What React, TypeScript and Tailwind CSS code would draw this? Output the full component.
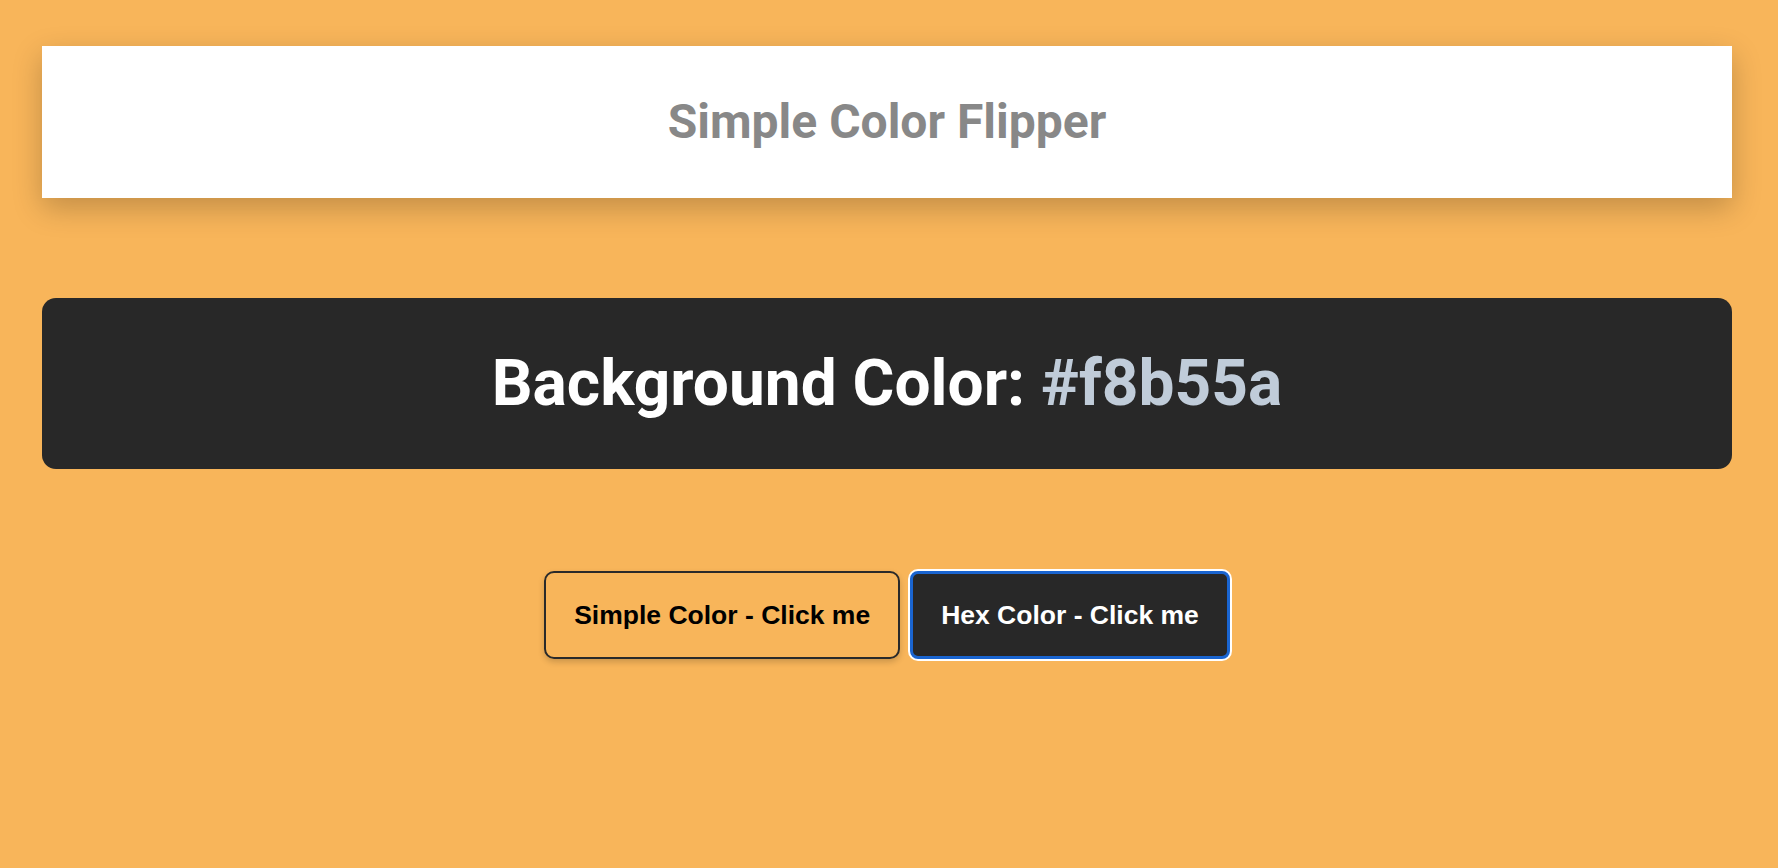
import React, { useState } from 'react';

const simpleColors = ['#f8b55a', 'red', 'green', 'rgba(133,122,200)', '#f15025'];
const hexChars = '0123456789abcdef';

function App() {
  const [color, setColor] = useState('#f8b55a');
  const [lastMode, setLastMode] = useState<'simple' | 'hex'>('hex');

  const flipSimple = () => {
    const next = simpleColors[Math.floor(Math.random() * simpleColors.length)];
    setColor(next);
    setLastMode('simple');
  };

  const flipHex = () => {
    let hex = '#';
    for (let i = 0; i < 6; i++) {
      hex += hexChars[Math.floor(Math.random() * 16)];
    }
    setColor(hex);
    setLastMode('hex');
  };

  return (
    <div
      className="min-h-screen pt-[46px] pl-[42px] pr-[46px] font-['Roboto',sans-serif]"
      style={{ backgroundColor: color }}
    >
      <header className="h-[152px] bg-white flex items-center justify-center shadow-[0_10px_28px_rgba(0,0,0,0.22)]">
        <h1 className="text-[48px] font-bold text-[#888888] leading-none">Simple Color Flipper</h1>
      </header>

      <section className="mt-[100px] h-[171px] rounded-[14px] bg-[#282828] flex items-center justify-center">
        <h2 className="text-[64px] font-bold text-white leading-none">
          Background Color: <span className="text-[#c0ccd9]">{color}</span>
        </h2>
      </section>

      <div className="mt-[102px] flex justify-center items-center gap-[10px] font-['Liberation_Sans',Arial,sans-serif]">
        <button
          onClick={flipSimple}
          className={`h-[88px] px-[28px] rounded-[10px] text-[26.5px] font-bold leading-none shadow-[0_3px_6px_rgba(0,0,0,0.18)] ${
            lastMode === 'simple'
              ? 'bg-[#282828] text-white border-[3px] border-[#1a65d1] ring-2 ring-white'
              : 'bg-transparent text-black border-2 border-[#2a2a2a]'
          }`}
        >
          Simple Color - Click me
        </button>
        <button
          onClick={flipHex}
          className={`h-[88px] px-[28px] rounded-[8px] text-[26.5px] font-bold leading-none ${
            lastMode === 'hex'
              ? 'bg-[#282828] text-white border-[3px] border-[#1a65d1] ring-2 ring-white'
              : 'bg-transparent text-black border-2 border-[#2a2a2a]'
          }`}
        >
          Hex Color - Click me
        </button>
      </div>
    </div>
  );
}

export default App;
